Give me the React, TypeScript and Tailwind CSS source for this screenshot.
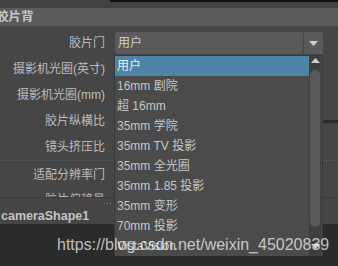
import React from 'react';

const options = [
  "用户",
  "16mm 剧院",
  "超 16mm",
  "35mm 学院",
  "35mm TV 投影",
  "35mm 全光圈",
  "35mm 1.85 投影",
  "35mm 变形",
  "70mm 投影",
  "VistaVision"
];

function Row({ label, h = "h-[26px]", children }: { label: string; h?: string; children?: React.ReactNode }) {
  return (
    <div className={`flex items-center ${h}`}>
      <div className="w-[106px] shrink-0 text-right pr-[1px] text-[#bdbdbd] whitespace-nowrap">{label}</div>
      <div className="flex-1 flex items-center ml-[9px]">{children}</div>
    </div>
  );
}

export default function App() {
  return (
    <div className="relative w-[338px] h-[266px] overflow-hidden bg-[#444444] text-[12px] font-['Liberation_Sans','Noto_Sans_CJK_SC',sans-serif] flex flex-col">
      {/* top strip */}
      <div className="h-[8px] shrink-0 bg-[#424242]">
        <div className="h-[2px] ml-[110px] bg-[#111111]"></div>
      </div>

      {/* section header */}
      <div className="h-[18px] shrink-0 bg-[#5b5b5b] flex items-center">
        <span className="-ml-[4px] font-bold text-[#c8c8c8] text-[12.5px]">胶片背</span>
      </div>

      {/* attributes */}
      <div className="h-[171px] shrink-0 overflow-hidden pt-[4px] bg-[#464646]">
        <Row label="胶片门">
          <div className="w-[188px] h-[22px] rounded-[2px] bg-[#5a5a5a] pl-[3px] flex items-center text-[#d0d0d0]">用户</div>
          <div className="ml-[1px] w-[19px] h-[22px] rounded-[2px] bg-[#5a5a5a] flex items-center justify-center">
            <svg width="9" height="5" viewBox="0 0 9 5"><path d="M0 0h9L4.5 5z" fill="#cfcfcf" /></svg>
          </div>
        </Row>
        <Row label="摄影机光圈(英寸)" />
        <Row label="摄影机光圈(mm)" />
        <Row label="胶片纵横比">
          <div className="ml-auto w-[16px] h-[3px] bg-[#2b2b2b]"></div>
        </Row>
        <Row label="镜头挤压比" />
        <div className="h-px bg-[#525252] mb-[2px]"></div>
        <Row label="适配分辨率门" h="h-[24px]" />
        <Row label="胶片偏移量" />
      </div>

      {/* node title bar */}
      <div className="h-[27px] shrink-0 border-t border-[#3c3c3c] bg-[#454545] flex flex-col">
        <div className="h-[10px] flex items-center gap-[2px] pl-[104px]">
          <span className="w-px h-px bg-[#8a8a8a]"></span>
          <span className="w-px h-px bg-[#8a8a8a]"></span>
          <span className="w-px h-px bg-[#8a8a8a]"></span>
        </div>
        <div className="h-[16px] leading-[16px] pl-[1px] font-bold text-[12.5px] text-[#c4c4c4]">cameraShape1</div>
      </div>

      <div className="flex-1 bg-[#2b2b2b]"></div>

      {/* open dropdown list */}
      <div className="absolute left-[114px] top-[55px] w-[209px] h-[201px] bg-[#4b4b4b] border border-[#393939] border-b-0 flex">
        <div className="w-[194px]">
          {options.map((o, i) => (
            <div
              key={o}
              className={`h-[20px] pl-[2px] flex items-center whitespace-nowrap ${i === 0 ? 'bg-[#4e85a7] text-[#eeeeee]' : 'text-[#c8c8c8]'}`}
            >
              {o}
            </div>
          ))}
        </div>
        <div className="w-[12px] bg-[#3f3f3f] flex flex-col items-center pt-[2px]">
          <svg width="9" height="5" viewBox="0 0 9 5"><path d="M4.5 0L9 5H0z" fill="#cfcfcf" /></svg>
          <div className="mt-[7px] w-[10px] h-[157px] rounded-full bg-[#5a5a5a]"></div>
          <svg className="mt-[17px]" width="9" height="5" viewBox="0 0 9 5"><path d="M0 0h9L4.5 5z" fill="#cfcfcf" /></svg>
        </div>
      </div>

      {/* watermark */}
      <div className="absolute left-[57px] top-[236px] text-[16px] leading-[18px] font-['Liberation_Sans',sans-serif] text-white/70 whitespace-nowrap">
        https://blog.csdn.net/weixin_45020839
      </div>
    </div>
  );
}
